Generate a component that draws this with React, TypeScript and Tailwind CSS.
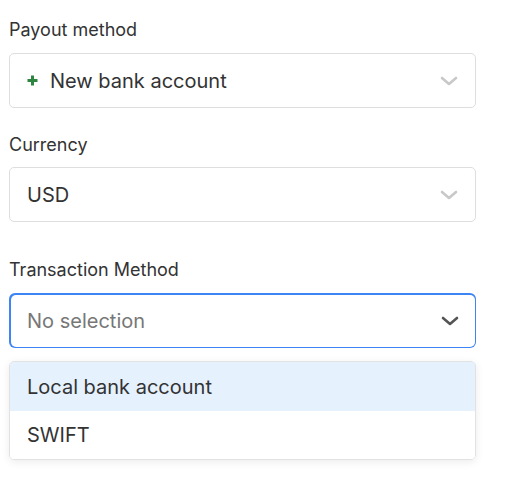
import React from "react";

const Chevron: React.FC<{ color: string }> = ({ color }) => (
  <svg width="18" height="10" viewBox="0 0 18 10" fill="none">
    <path d="M2 2l7 6 7-6" stroke={color} strokeWidth="2.6" strokeLinecap="round" strokeLinejoin="round" />
  </svg>
);

const Plus: React.FC = () => (
  <svg width="11" height="11" viewBox="0 0 11 11" fill="none" className="mr-[12px]">
    <path d="M5.5 0.5v10M0.5 5.5h10" stroke="#2e8540" strokeWidth="3" />
  </svg>
);

const App: React.FC = () => {
  return (
    <div className="w-[515px] h-[501px] bg-white px-[9px] pt-[17px] font-['Inter',sans-serif] text-[#333333]">
      <div className="w-[467px]">
        <div className="text-[18px] leading-[26px]">Payout method</div>
        <div className="mt-[10px] h-[55px] flex items-center border border-[#dedede] rounded-[5px] pl-[17px] pr-[17px]">
          <Plus />
          <span className="text-[20px] flex-1">New bank account</span>
          <Chevron color="#c8c8c8" />
        </div>

        <div className="mt-[24px] text-[18px] leading-[26px]">Currency</div>
        <div className="mt-[9px] h-[55px] flex items-center border border-[#dedede] rounded-[5px] pl-[17px] pr-[17px]">
          <span className="text-[20px] flex-1">USD</span>
          <Chevron color="#c8c8c8" />
        </div>

        <div className="mt-[35px] text-[18px] leading-[26px]">Transaction Method</div>
        <div className="mt-[10px] h-[55px] p-[1.5px] rounded-[6px] bg-[#3d84f5]">
          <div className="h-full flex items-center bg-white rounded-[5px] pl-[16.5px] pr-[16px]">
            <span className="text-[20px] flex-1 text-[#777777]">No selection</span>
            <Chevron color="#555555" />
          </div>
        </div>

        <div className="mt-[13px] border border-[#e2e2e2] rounded-[5px] overflow-hidden shadow-[0_2px_8px_rgba(0,0,0,0.08)]">
          <div className="h-[49px] flex items-center bg-[#e5f1fd] pl-[17px] text-[20px]">Local bank account</div>
          <div className="h-[48px] flex items-center bg-white pl-[17px] text-[20px]">SWIFT</div>
        </div>
      </div>
    </div>
  );
};

export default App;
